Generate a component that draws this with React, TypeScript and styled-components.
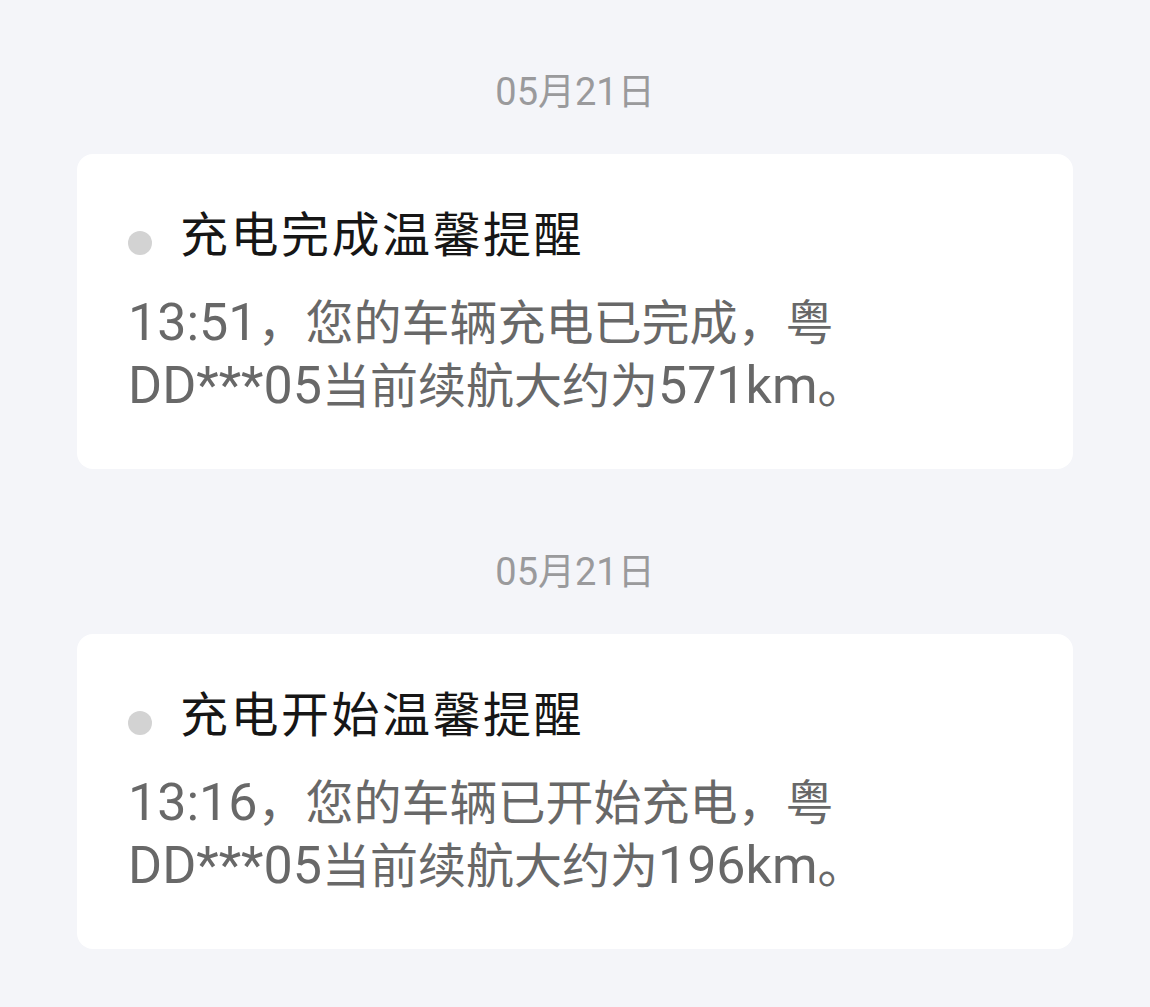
import styled, { createGlobalStyle } from "styled-components";

const GlobalStyle = createGlobalStyle`
  html, body {
    margin: 0;
    padding: 0;
    background: #f4f5f9;
  }
  body {
    font-family: "Noto Sans CJK SC", "Noto Sans", sans-serif;
  }
`;

const Page = styled.div`
  display: flex;
  flex-direction: column;
  gap: 75px;
  padding: 64px 77px 60px;
  min-height: 100vh;
  box-sizing: border-box;
`;

const Group = styled.section`
  display: flex;
  flex-direction: column;
  gap: 40px;
`;

const DateLabel = styled.div`
  text-align: center;
  font-size: 37px;
  line-height: 50px;
  color: #9a9a9c;
`;

const Card = styled.div`
  background: #ffffff;
  border-radius: 16px;
  padding: 47px 150px 55px 51px;
`;

const TitleRow = styled.div`
  display: flex;
  align-items: center;
  gap: 28px;
`;

const Dot = styled.span`
  width: 24px;
  height: 24px;
  border-radius: 50%;
  background: #d3d3d3;
  margin-top: 24px;
  flex-shrink: 0;
`;

const Title = styled.h2`
  margin: 0;
  font-size: 48px;
  line-height: 60px;
  font-weight: 400;
  letter-spacing: 2.5px;
  color: #161616;
`;

const Body = styled.p`
  margin: 27px 0 0;
  font-size: 48px;
  line-height: 63px;
  color: #686868;
`;

const Latin = styled.span<{ $size: number }>`
  font-family: "Roboto", "Noto Sans", sans-serif;
  font-size: ${(p) => p.$size}px;
  line-height: 1;
`;

// ascii runs are drawn a little larger in Roboto, as on the phone
function Mixed({ text, size }: { text: string; size: number }) {
  const parts = text.split(/([\x20-\x7e]+)/).filter(Boolean);
  return (
    <>
      {parts.map((p, i) =>
        /^[\x20-\x7e]+$/.test(p) ? (
          <Latin key={i} $size={size}>
            {p}
          </Latin>
        ) : (
          <span key={i}>{p}</span>
        )
      )}
    </>
  );
}

const messages = [
  {
    date: "05月21日",
    title: "充电完成温馨提醒",
    body: "13:51，您的车辆充电已完成，粤DD***05当前续航大约为571km。",
  },
  {
    date: "05月21日",
    title: "充电开始温馨提醒",
    body: "13:16，您的车辆已开始充电，粤DD***05当前续航大约为196km。",
  },
];

export default function App() {
  return (
    <>
      <GlobalStyle />
      <Page>
        {messages.map((m, i) => (
          <Group key={i}>
            <DateLabel>
              <Mixed text={m.date} size={38} />
            </DateLabel>
            <Card>
              <TitleRow>
                <Dot />
                <Title>{m.title}</Title>
              </TitleRow>
              <Body>
                <Mixed text={m.body} size={52} />
              </Body>
            </Card>
          </Group>
        ))}
      </Page>
    </>
  );
}
